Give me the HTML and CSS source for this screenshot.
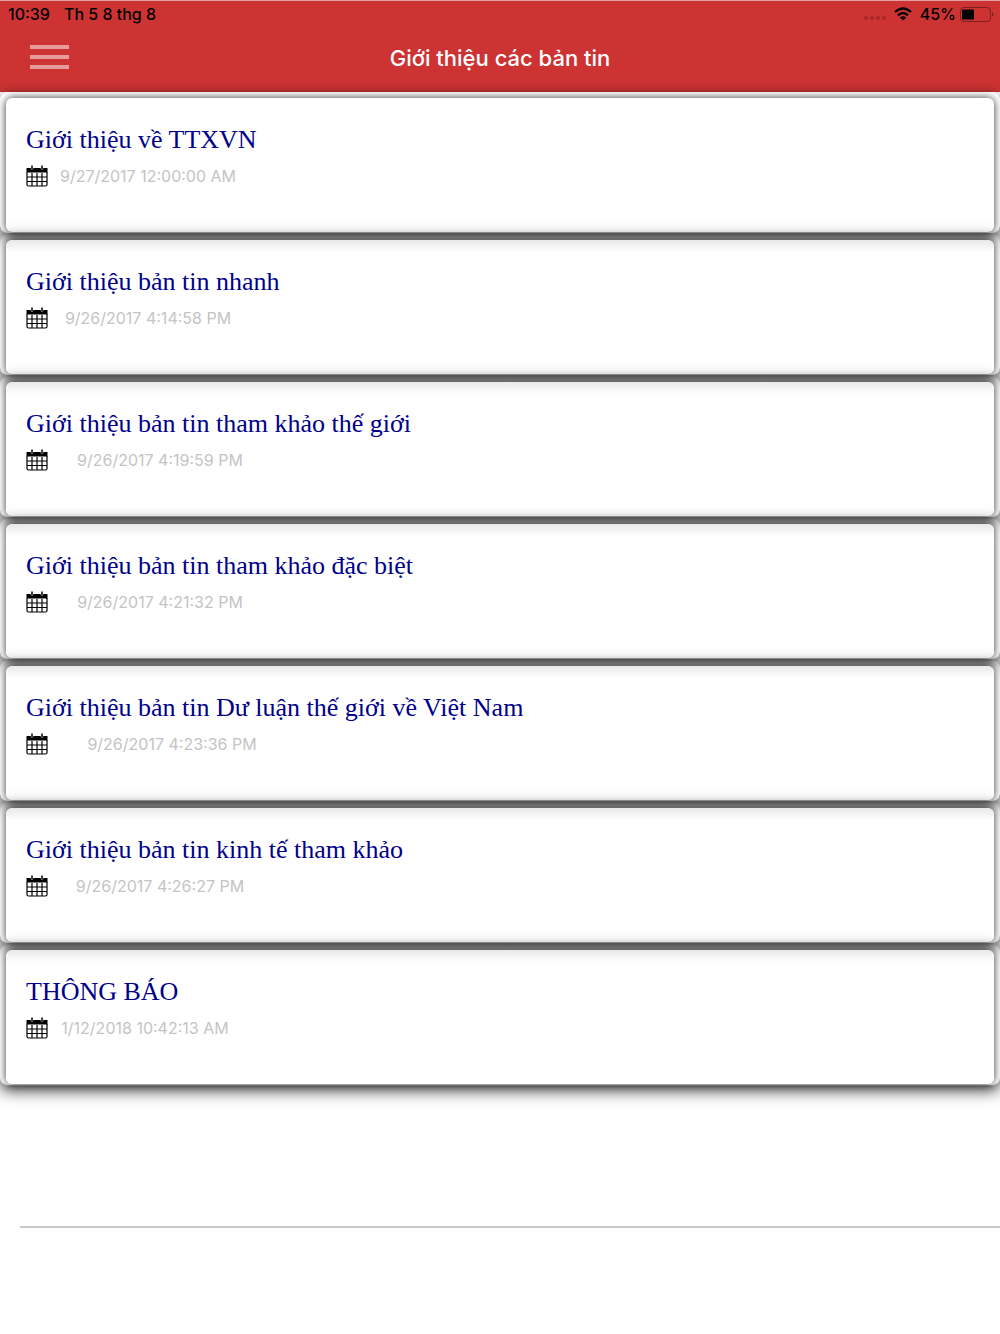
FILE: index.html
```html
<!DOCTYPE html>
<html lang="vi">
<head>
    <meta charset="UTF-8">
    <meta name="viewport" content="width=device-width, initial-scale=1.0">
    <title>Giới thiệu các bản tin</title>
    <link rel="stylesheet" href="styles.css">
</head>
<body>
    <svg class="sprite" aria-hidden="true">
        <symbol id="calendar" viewBox="0 0 22 22">
            <path d="M0.500 3H4.500Q6 7 7.500 3H14.500Q16 7 17.500 3H21.500V7.500H0.500z"/>
            <path d="M1 7v12.500q0 1.500 1.500 1.500h17q1.500 0 1.500-1.500V7M1 12h20M1 16.500h20M6 8v13M11 8v13M16 8v13" fill="none" stroke="#000" stroke-width="1.200"/>
            <path d="M6 0.500v4M16 0.500v4" stroke="#000" stroke-width="1.500"/>
        </symbol>
    </svg>

    <header class="header">
        <div class="status-bar">
            <span>10:39</span>
            <span>Th 5 8 thg 8</span>
            <div class="status-right">
                <svg class="signal" width="22" height="6" viewBox="0 0 22 6">
                    <circle cx="2" cy="4" r="2"/>
                    <circle cx="8" cy="4" r="2"/>
                    <circle cx="14" cy="4" r="2"/>
                    <circle cx="20" cy="4" r="2"/>
                </svg>
                <svg class="wifi" width="18" height="14" viewBox="0 0 18 14">
                    <path d="M1 5Q9-2 17 5M4 8.300Q9 4 14 8.300" fill="none" stroke="#000" stroke-width="2.300"/>
                    <path d="M9 13.500L5.800 10.500Q9 8 12.200 10.500z"/>
                </svg>
                <span>45%</span>
                <svg class="battery" width="34" height="15" viewBox="0 0 34 15">
                    <rect x="0.500" y="0.500" width="30" height="14" rx="3.500" fill="none" stroke="#7b1f1f"/>
                    <rect x="2" y="2.500" width="12" height="10" rx="1"/>
                    <path d="M32 5q3 2.500 0 5z" fill="#7b1f1f"/>
                </svg>
            </div>
        </div>
        <div class="nav-bar">
            <button class="menu-button" aria-label="Menu">
                <span></span>
                <span></span>
                <span></span>
            </button>
            <h1>Giới thiệu các bản tin</h1>
        </div>
    </header>

    <main>
        <ul class="news-list">
            <li class="news-item">
                <div class="card">
                    <h2>Giới thiệu về TTXVN</h2>
                    <div class="meta">
                        <svg class="icon"><use href="#calendar"/></svg>
                        <time>9/27/2017 12:00:00 AM</time>
                    </div>
                </div>
            </li>
            <li class="news-item">
                <div class="card">
                    <h2>Giới thiệu bản tin nhanh</h2>
                    <div class="meta">
                        <svg class="icon"><use href="#calendar"/></svg>
                        <time>9/26/2017 4:14:58 PM</time>
                    </div>
                </div>
            </li>
            <li class="news-item">
                <div class="card">
                    <h2>Giới thiệu bản tin tham khảo thế giới</h2>
                    <div class="meta">
                        <svg class="icon"><use href="#calendar"/></svg>
                        <time class="medium">9/26/2017 4:19:59 PM</time>
                    </div>
                </div>
            </li>
            <li class="news-item">
                <div class="card">
                    <h2>Giới thiệu bản tin tham khảo đặc biệt</h2>
                    <div class="meta">
                        <svg class="icon"><use href="#calendar"/></svg>
                        <time class="medium">9/26/2017 4:21:32 PM</time>
                    </div>
                </div>
            </li>
            <li class="news-item">
                <div class="card">
                    <h2>Giới thiệu bản tin Dư luận thế giới về Việt Nam</h2>
                    <div class="meta">
                        <svg class="icon"><use href="#calendar"/></svg>
                        <time class="wide">9/26/2017 4:23:36 PM</time>
                    </div>
                </div>
            </li>
            <li class="news-item">
                <div class="card">
                    <h2>Giới thiệu bản tin kinh tế tham khảo</h2>
                    <div class="meta">
                        <svg class="icon"><use href="#calendar"/></svg>
                        <time class="medium">9/26/2017 4:26:27 PM</time>
                    </div>
                </div>
            </li>
            <li class="news-item">
                <div class="card">
                    <h2>THÔNG BÁO</h2>
                    <div class="meta">
                        <svg class="icon"><use href="#calendar"/></svg>
                        <time class="narrow">1/12/2018 10:42:13 AM</time>
                    </div>
                </div>
            </li>
        </ul>
        <hr class="separator">
    </main>
</body>
</html>
```
FILE: styles.css
```css
* {
    margin: 0;
    padding: 0;
    box-sizing: border-box;
}

body {
    font-family: Inter, "Liberation Sans", sans-serif;
    background: #fff;
    overflow-x: hidden;
}

.sprite {
    display: none;
}

.header {
    background: #cd3333;
    border-top: 1px solid #e3a0a0;
}

.status-bar {
    display: flex;
    align-items: center;
    gap: 14px;
    height: 26px;
    padding: 0 6px 0 8px;
    font-size: 16px;
    font-weight: 500;
}

.status-right {
    display: flex;
    align-items: center;
    gap: 8px;
    margin-left: auto;
}

.signal {
    fill: #a52929;
    margin-top: 6px;
}

.battery {
    margin-left: -4px;
}

.nav-bar {
    display: grid;
    grid-template-columns: 100px 1fr 100px;
    align-items: center;
    height: 65px;
    padding-bottom: 3px;
}

.nav-bar h1 {
    color: #fff;
    font-size: 22px;
    font-weight: 500;
    text-align: center;
}

.menu-button {
    display: flex;
    flex-direction: column;
    gap: 6px;
    width: 39px;
    margin: 0 0 2px 30px;
    border: none;
    background: none;
    cursor: pointer;
}

.menu-button span {
    height: 4px;
    background: #e79b9b;
}

.news-list {
    list-style: none;
}

/* khung ngoài, bóng đổ xuống bản tin bên dưới */
.news-item {
    height: 142px;
    padding: 6px 6px 1px;
    border: 1px solid #999;
    border-width: 0 0 1px;
    border-radius: 8px;
    box-shadow: 0 5px 15px rgba(0, 0, 0, 0.7);
}

.card {
    height: 100%;
    padding: 26px 20px;
    border-radius: 6px;
    background: #fff;
    box-shadow: 0 0 8px rgba(0, 0, 0, 0.8);
}

.news-item + .news-item .card {
    background: linear-gradient(#e8e8e8, #fff 12px);
}

.card h2 {
    color: #00008b;
    font-family: "Liberation Serif", serif;
    font-size: 26px;
    font-weight: normal;
    line-height: 32px;
}

.meta {
    display: flex;
    align-items: center;
    margin-top: 9px;
}

.icon {
    width: 22px;
    height: 22px;
}

.meta time {
    width: 200px;
    color: #c4c4c4;
    font-size: 16px;
    text-align: center;
}

.meta .narrow {
    width: 194px;
}

.meta .medium {
    width: 224px;
}

.meta .wide {
    width: 248px;
}

.separator {
    margin: 140px 0 0 20px;
    border: none;
    border-top: 2px solid #c8c8c8;
}
```
